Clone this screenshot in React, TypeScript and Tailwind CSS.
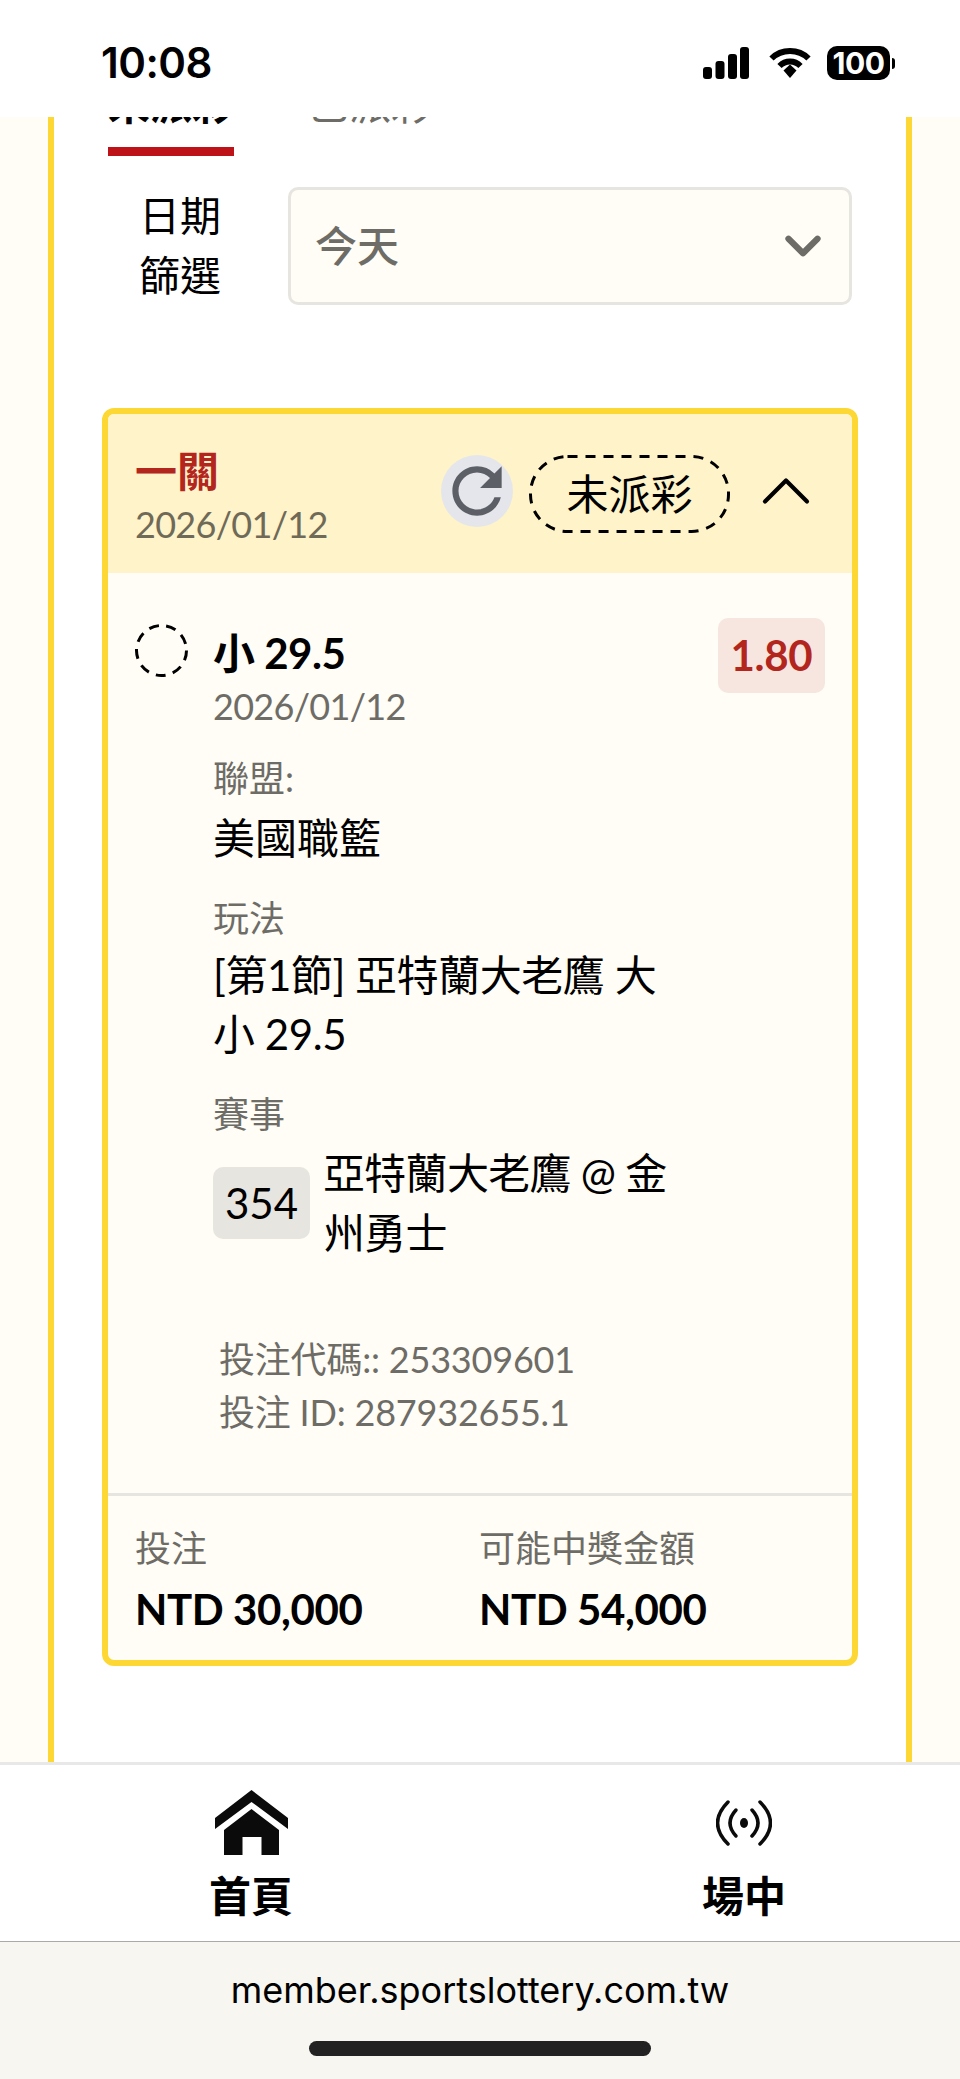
import { ChevronDown, ChevronUp } from 'lucide-react'
import { MdRefresh } from 'react-icons/md'

const font = "font-['Lato','Noto_Sans_CJK_TC',sans-serif]"

function StatusIcons() {
  return (
    <div className="flex items-center">
      <svg width="46" height="32" viewBox="0 0 46 32" fill="#000">
        <rect x="0" y="20" width="9" height="12" rx="3" />
        <rect x="12.5" y="14" width="9" height="18" rx="3" />
        <rect x="25" y="7" width="9" height="25" rx="3" />
        <rect x="37" y="0" width="9" height="32" rx="3" />
      </svg>
      <svg className="ml-[20px]" width="42" height="32" viewBox="0 0 42 32" fill="none" stroke="#000">
        <path d="M2.5 11.5C12.5 1.5 29.5 1.5 39.5 11.5" strokeWidth="6" />
        <path d="M10.5 19C16.5 13 25.5 13 31.5 19" strokeWidth="6" />
        <path d="M14.5 23.5L21 17.5L27.5 23.5L21 31Z" fill="#000" stroke="none" />
      </svg>
      <div className="ml-[16px] flex items-center">
        <div className="flex h-[34px] w-[63px] items-center justify-center rounded-[10px] bg-black font-['Inter',sans-serif] text-[30px] font-bold tracking-[-0.5px] text-white">
          100
        </div>
        <div className="ml-[2px] h-[11px] w-[3px] rounded-r-full bg-black" />
      </div>
    </div>
  )
}

function HomeIcon() {
  return (
    <svg width="73" height="66" viewBox="0 0 73 66" fill="#0b0b0b">
      <path d="M36.5 0L73 28V39L36.5 12L0 39V28Z" />
      <path d="M36.5 19L64 40V65H46.5V47H27.5V65H9V40Z" />
    </svg>
  )
}

function LiveIcon() {
  return (
    <svg width="56" height="46" viewBox="0 0 56 46" fill="none" stroke="#0b0b0b" strokeWidth="3.5" strokeLinecap="round">
      <path d="M12 2Q-9 23 12 44" />
      <path d="M20 10Q8 23 20 36" />
      <ellipse cx="28" cy="23" rx="4" ry="5" fill="#0b0b0b" stroke="none" />
      <path d="M36 10Q48 23 36 36" />
      <path d="M44 2Q65 23 44 44" />
    </svg>
  )
}

function Field({ label, children }: { label: string; children: React.ReactNode }) {
  return (
    <div>
      <div className="text-[36px] leading-[48px] text-[#6e6c66]">{label}</div>
      {children}
    </div>
  )
}

export default function App() {
  return (
    <div className={`flex h-[2079px] w-[960px] flex-col overflow-hidden bg-white text-black ${font}`}>
      <div className="flex h-[117px] shrink-0 items-start justify-between bg-white pl-[101px] pr-[65px] pt-[39px]">
        <span className="font-['Inter',sans-serif] text-[42px] font-semibold leading-[48px] tracking-[-0.5px]">10:08</span>
        <div className="pt-[7px]">
          <StatusIcons />
        </div>
      </div>

      <main className="min-h-0 flex-1 overflow-hidden bg-[#fffdf6] px-[48px]">
        <div className="flow-root h-full border-x-[6px] border-[#fdd835] bg-white">
          <div className="-mt-[43px] flex gap-[73px] pl-[54px]">
            <div className="border-b-[9px] border-[#bd1218] pb-[13px] text-[42px] font-bold leading-[60px]">未派彩</div>
            <div className="text-[42px] leading-[60px] text-[#6e6c66]">已派彩</div>
          </div>

          <div className="ml-[85px] mt-[30px] flex items-center gap-[67px]">
            <div className="w-[82px] text-center text-[41px] leading-[60px]">
              <div>日期</div>
              <div>篩選</div>
            </div>
            <div className="flex h-[118px] w-[564px] items-center justify-between rounded-[10px] border-[3px] border-[#e7e5df] bg-[#fffdf6] pl-[24px] pr-[17px]">
              <span className="text-[42px] font-medium text-[#6e6c66]">今天</span>
              <ChevronDown size={58} strokeWidth={2.6} className="text-[#6e6c66]" />
            </div>
          </div>

          <section className="ml-[48px] mt-[102px] w-[756px] overflow-hidden rounded-[12px] border-[6px] border-[#fdd835] bg-[#fffdf6]">
            <header className="flex h-[159px] items-start justify-between bg-[#fff3c9] pl-[27px] pr-[24px] pt-[27px]">
              <div>
                <div className="text-[42px] font-bold leading-[60px] text-[#b3261e]">一關</div>
                <div className="text-[36px] leading-[46px] tracking-[-0.7px] text-[#6f6a58]">2026/01/12</div>
              </div>
              <div className="flex items-start">
                <div className="mt-[14px] flex h-[72px] w-[72px] items-center justify-center rounded-full bg-[#e4e6eb]">
                  <MdRefresh size={74} className="shrink-0 text-[#5c5f66]" />
                </div>
                <div className="relative ml-[16px] mt-[14px] flex h-[78px] w-[201px] items-center justify-center text-[42px]">
                  <svg className="absolute inset-0" width="201" height="78" fill="none">
                    <rect x="1.5" y="1.5" width="198" height="75" rx="37" stroke="#000" strokeWidth="3" strokeDasharray="10 8" />
                  </svg>
                  未派彩
                </div>
                <ChevronUp size={84} strokeWidth={1.2} className="ml-[14px] mt-[8px]" />
              </div>
            </header>

            <div className="flex items-start justify-between px-[27px] pt-[45px]">
              <div className="flex">
                <svg className="mt-[6px] shrink-0" width="53" height="53" fill="none">
                  <circle cx="26.5" cy="26.5" r="25" stroke="#000" strokeWidth="3" strokeDasharray="10 7.4" />
                </svg>
                <div className="ml-[25px] w-[470px] pt-[5px]">
                  <div className="text-[42px] font-bold leading-[60px] tracking-[-0.5px]">小 29.5</div>
                  <div className="-mt-[1px] text-[36px] leading-[48px] tracking-[-0.7px] text-[#6e6c66]">2026/01/12</div>

                  <div className="mt-[24px]">
                    <Field label="聯盟:">
                      <div className="mt-[6px] text-[42px] leading-[60px]">美國職籃</div>
                    </Field>
                  </div>
                  <div className="mt-[26px]">
                    <Field label="玩法">
                      <div className="mt-[4px] w-[460px] text-[42px] leading-[59px] tracking-[-0.45px]">[第1節] 亞特蘭大老鷹 大小 29.5</div>
                    </Field>
                  </div>
                  <div className="mt-[26px]">
                    <Field label="賽事">
                      <div className="mt-[5px] flex items-center gap-[13px]">
                        <div className="flex h-[72px] w-[97px] shrink-0 items-center justify-center rounded-[10px] bg-[#e7e5df] text-[42px]">354</div>
                        <div className="w-[360px] text-[42px] leading-[60px] tracking-[-0.7px]">亞特蘭大老鷹 @ 金州勇士</div>
                      </div>
                    </Field>
                  </div>
                </div>
              </div>
              <div className="flex h-[75px] w-[107px] items-center justify-center rounded-[10px] bg-[#f6e6df] text-[42px] font-bold tracking-[-0.3px] text-[#b3261e]">1.80</div>
            </div>

            <div className="ml-[111px] mt-[70px] text-[36px] leading-[53px] tracking-[-0.2px] text-[#6e6c66]">
              <div>投注代碼:: 253309601</div>
              <div>投注 ID: 287932655.1</div>
            </div>

            <div className="mt-[54px] grid grid-cols-[344px_1fr] border-t-[3px] border-[#e7e5df] px-[27px] pb-[21px] pt-[28px]">
              <div>
                <div className="text-[36px] leading-[48px] text-[#6e6c66]">投注</div>
                <div className="mt-[7px] text-[42px] font-bold leading-[60px] tracking-[-0.4px]">NTD 30,000</div>
              </div>
              <div>
                <div className="text-[36px] leading-[48px] text-[#6e6c66]">可能中獎金額</div>
                <div className="mt-[7px] text-[42px] font-bold leading-[60px] tracking-[-0.4px]">NTD 54,000</div>
              </div>
            </div>
          </section>
        </div>
      </main>

      <nav className="flex h-[179px] shrink-0 gap-[333px] border-t-[3px] border-[#e8e8e8] bg-white pl-[171px]">
        <div className="flex w-[160px] flex-col items-center pt-[25px] text-[42px] font-bold leading-[60px]">
          <div className="flex h-[66px] items-center">
            <HomeIcon />
          </div>
          <div className="mt-[10px]">首頁</div>
        </div>
        <div className="flex w-[160px] flex-col items-center pt-[25px] text-[42px] font-bold leading-[60px]">
          <div className="flex h-[66px] items-center">
            <LiveIcon />
          </div>
          <div className="mt-[10px]">場中</div>
        </div>
      </nav>

      <footer className="flex h-[138px] shrink-0 flex-col items-center border-t border-[#aaaaaa] bg-[#f8f6f0] pt-[24px]">
        <div className="font-['Inter',sans-serif] text-[36px] leading-[48px]">member.sportslottery.com.tw</div>
        <div className="mt-[27px] h-[15px] w-[342px] rounded-full bg-[#222222]" />
      </footer>
    </div>
  )
}
